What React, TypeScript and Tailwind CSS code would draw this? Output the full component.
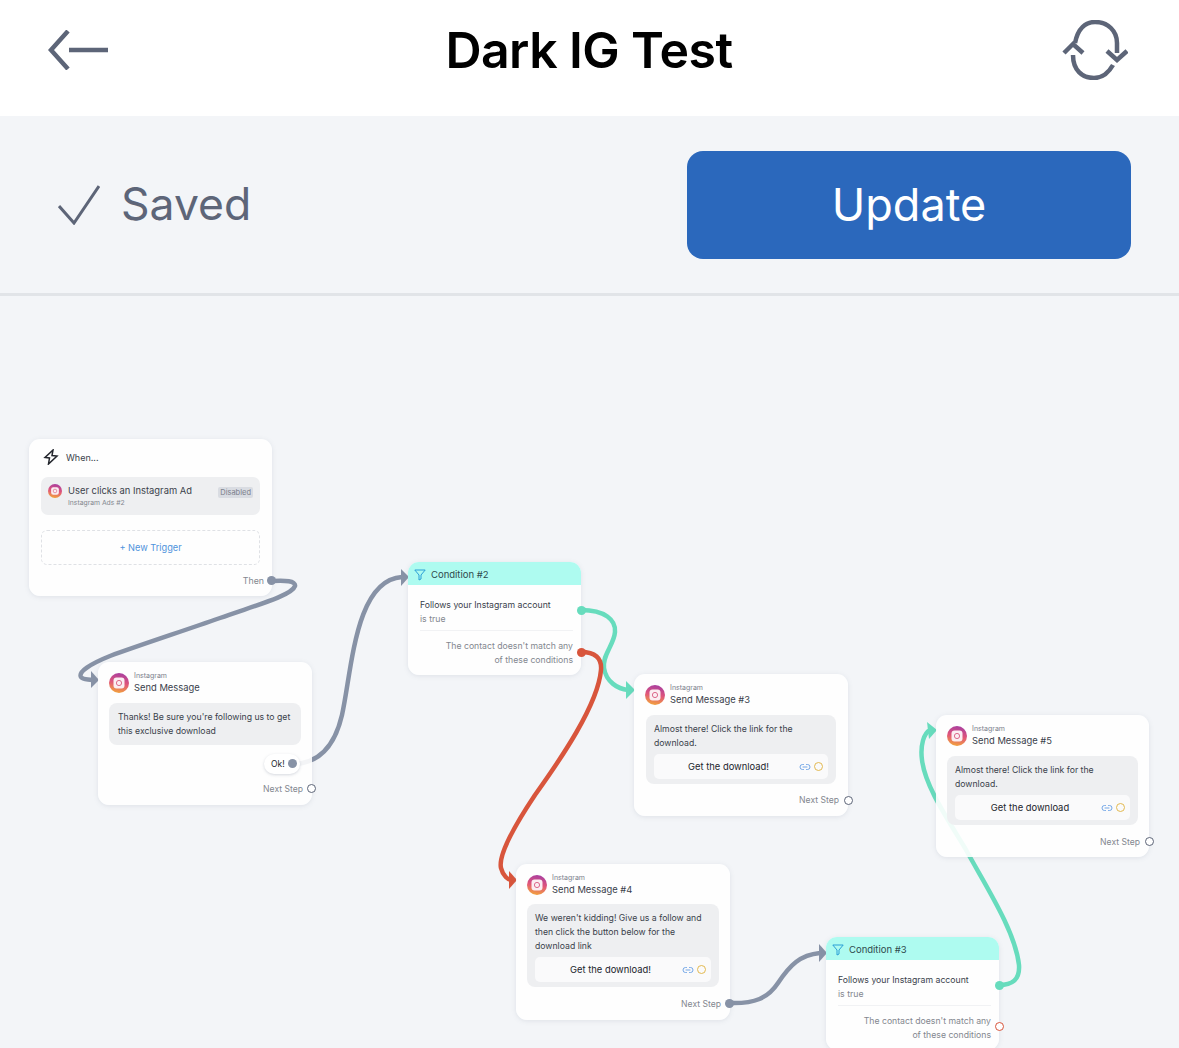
import { Link2 } from 'lucide-react'
import type { ReactNode } from 'react'

function InstagramIcon({ size, id }: { size: number; id: string }) {
  return (
    <svg width={size} height={size} viewBox="0 0 20 20" className="shrink-0">
      <defs>
        <linearGradient id={id} x1="0.6" y1="0" x2="0.4" y2="1">
          <stop offset="0" stopColor="#a83ea0" />
          <stop offset="0.5" stopColor="#e0557a" />
          <stop offset="1" stopColor="#f2a33c" />
        </linearGradient>
      </defs>
      <circle cx="10" cy="10" r="10" fill={`url(#${id})`} />
      <rect x="4.5" y="4.5" width="11" height="11" rx="3" fill="#fbeef2" />
      <circle cx="10" cy="10" r="2.6" fill="none" stroke="#dc6a8c" strokeWidth="1" />
    </svg>
  )
}

function FunnelIcon() {
  return (
    <svg width="12" height="12" viewBox="0 0 12 12" fill="none" stroke="#2a9fd6" strokeWidth="1" strokeLinejoin="round" className="shrink-0">
      <path d="M0.8 1 H11.2 L7 6 V10 L5 11 V6 Z" />
    </svg>
  )
}

function Port({ className }: { className: string }) {
  return <span className={`absolute h-[9px] w-[9px] rounded-full ${className}`} />
}

function Card({ className, children }: { className: string; children: ReactNode }) {
  return (
    <div className={`absolute rounded-[11px] bg-white/90 shadow-[0_1px_5px_rgba(120,130,150,0.16)] ${className}`}>
      {children}
    </div>
  )
}

function MessageHead({ title, id }: { title: string; id: string }) {
  return (
    <div className="flex items-center gap-[5px]">
      <InstagramIcon size={20} id={id} />
      <div className="flex flex-col">
        <span className="text-[7px] leading-[10px] text-[#7b808c]">Instagram</span>
        <span className="text-[9.4px] leading-[13px] text-[#3a3f4b]">{title}</span>
      </div>
    </div>
  )
}

function LinkButton({ label }: { label: string }) {
  return (
    <div className="mt-[4px] flex h-[25px] items-center rounded-[5px] bg-[#fafafb] pl-[8px] pr-[5px]">
      <span className="flex-1 pr-[4px] text-center text-[9.4px] text-[#22252c]">{label}</span>
      <span className="flex items-center gap-[3px]">
        <Link2 size={12} strokeWidth={1.9} color="#6fa3e6" />
        <span className="h-[9px] w-[9px] rounded-full border border-[#e3b94f]" />
      </span>
    </div>
  )
}

function NextStep({ className, dot }: { className: string; dot: string }) {
  return (
    <>
      <span className={`absolute text-[8.6px] leading-[12px] text-[#83878f] ${className}`}>Next Step</span>
      <Port className={dot} />
    </>
  )
}

function ConditionBody({ title }: { title: string }) {
  return (
    <>
      <div className="flex h-[23px] items-center gap-[5px] rounded-t-[11px] bg-[#aefbf0] pl-[6px] pt-[3px]">
        <FunnelIcon />
        <span className="text-[9.5px] text-[#2f4a4d]">{title}</span>
      </div>
      <div className="px-[12px] pt-[13px] text-[8.7px] leading-[14px]">
        <div className="text-[#3a3f4b]">Follows your Instagram account</div>
        <div className="text-[#83878f]">is true</div>
        <div className="mt-[4px] -mr-[4px] border-t border-[#f1f2f4] pt-[8px] text-right text-[#83878f]">
          <div>The contact doesn't match any</div>
          <div>of these conditions</div>
        </div>
      </div>
    </>
  )
}

export default function App() {
  return (
    <div className="flex h-[1048px] w-[1179px] flex-col overflow-hidden bg-[#f3f5f8] font-['Inter',sans-serif]">
      {/* Header */}
      <header className="flex h-[116px] items-center justify-between bg-white pb-[16px] pl-[48px] pr-[51px]">
        <svg width="60" height="40" viewBox="0 0 60 40" fill="none" stroke="#5d6578" strokeWidth="4.5">
          <path d="M20 1 L3 20 L20 39" />
          <path d="M21 20 H60" />
        </svg>
        <h1 className="ml-[8px] text-[50px] font-semibold tracking-[-0.6px] text-black">Dark IG Test</h1>
        <svg width="66" height="60" viewBox="0 0 66 60" fill="none" stroke="#5d6578" strokeWidth="4.5">
          <path d="M13 23 C16 8 24 2 33 2 C46 2 55 11 55 23 L55 33" />
          <path d="M11 35 C11 50 20 58 32 58 C41 58 47 52 51 45" />
          <path d="M2 33 L11 24 L21 33" />
          <path d="M45 31 L55 40 L65 31" />
        </svg>
      </header>

      {/* Toolbar */}
      <div className="flex h-[180px] items-center justify-between border-b-[3px] border-[#e1e4e8] pl-[58px] pr-[48px]">
        <div className="flex items-center gap-[21px]">
          <svg width="42" height="40" viewBox="0 0 42 40" fill="none" stroke="#5d6578" strokeWidth="3">
            <path d="M1 21 L16 38 L41 1" />
          </svg>
          <span className="text-[44.5px] leading-none text-[#5d6578]">Saved</span>
        </div>
        <button className="flex h-[108px] w-[444px] items-center justify-center rounded-[16px] bg-[#2b68bc] text-[45px] text-white">
          Update
        </button>
      </div>

      {/* Canvas */}
      <main className="relative flex-1">
        <svg className="absolute left-0 top-[-296px]" width="1179" height="1048" fill="none" strokeWidth="4.5" strokeLinecap="round">
          <g stroke="#8792a6">
            <path d="M272 581 C285 580 296 581 295 586 C292 596 250 607 220 618 C180 632 140 645 110 656 C90 664 78 672 81 677 C83 680 88 679 92 680" />
            <path d="M292 764 C320 764 335 745 342 715 C352 670 355 580 402 577" />
            <path d="M729 1003 C755 1004 768 998 778 983 C790 965 800 955 820 953" />
          </g>
          <path d="M91 671 L99 680 L91 688 Z" fill="#8792a6" />
          <path d="M401 569 L409 577 L401 586 Z" fill="#8792a6" />
          <path d="M819 944 L827 953 L819 962 Z" fill="#8792a6" />
          <g stroke="#67dcbd">
            <path d="M581 610 C605 610 616 620 615 632 C614 645 602 655 604 668 C606 682 618 689 628 690" />
            <path d="M999 985 C1012 985 1020 980 1019 965 C1015 930 985 885 965 848 C945 815 925 785 922 760 C920 745 924 733 930 730" />
          </g>
          <path d="M626 681 L635 690 L626 699 Z" fill="#67dcbd" />
          <path d="M927 722 L937 730 L929 739 Z" fill="#67dcbd" />
          <path stroke="#d8553c" d="M581 652 C595 652 602 658 601 670 C598 705 560 760 535 795 C515 825 498 855 501 868 C503 876 508 880 512 880" />
          <path d="M509 871 L517 880 L509 889 Z" fill="#d8553c" />
        </svg>

        {/* When */}
        <Card className="left-[29px] top-[143px] h-[157px] w-[243px]">
          <div className="flex items-center gap-[7px] pl-[14px] pt-[10px]">
            <svg width="16" height="16" viewBox="0 0 16 16" fill="none" stroke="#22252c" strokeWidth="1.5" strokeLinejoin="miter" className="shrink-0">
              <path d="M10 1 L2 8.5 L6.5 9 L5.5 15 L14 7 L9 6.5 Z" />
            </svg>
            <span className="pt-[2px] text-[9px] text-[#3a3f4b]">When...</span>
          </div>
          <div className="mx-[12px] mt-[12px] flex h-[38px] rounded-[7px] bg-[#eeeff1] px-[7px] pt-[7px]">
            <InstagramIcon size={14} id="ig-when" />
            <div className="ml-[6px] flex flex-1 flex-col">
              <span className="text-[9.4px] leading-[13px] text-[#3a3f4b]">User clicks an Instagram Ad</span>
              <span className="text-[6.8px] leading-[11px] text-[#83878f]">Instagram Ads #2</span>
            </div>
            <span className="mt-[3px] h-[11px] rounded-[2px] bg-[#d9dce2] px-[2px] text-[7.5px] leading-[11px] text-[#7b808c]">Disabled</span>
          </div>
          <div className="mx-[12px] mt-[15px] flex h-[35px] items-center justify-center rounded-[6px] border border-dashed border-[#dfe1e5] text-[9.2px] text-[#4f93dc]">
            + New Trigger
          </div>
          <span className="absolute right-[8px] top-[136px] text-[8.8px] leading-[12px] text-[#83878f]">Then</span>
          <Port className="left-[238px] top-[137px] bg-[#8792a6]" />
        </Card>

        {/* Send Message */}
        <Card className="left-[98px] top-[366px] h-[143px] w-[214px]">
          <div className="pl-[11px] pt-[9px]"><MessageHead title="Send Message" id="ig-1" /></div>
          <div className="mx-[11px] mt-[9px] rounded-[8px] bg-[#eeeff1] px-[9px] py-[7px] text-[8.7px] leading-[14px] text-[#3a3f4b]">
            Thanks! Be sure you're following us to get<br />this exclusive download
          </div>
          <span className="absolute left-[166px] top-[92px] flex h-[20px] w-[36px] items-center rounded-[10px] bg-white pl-[7px] text-[8.5px] text-[#22252c] shadow-[0_1px_3px_rgba(120,130,150,0.3)]">Ok!</span>
          <Port className="left-[190px] top-[97px] bg-[#8792a6]" />
          <NextStep className="right-[9px] top-[121px]" dot="left-[209px] top-[122px] border border-[#5d6578] bg-white" />
        </Card>

        {/* Condition #2 */}
        <Card className="left-[408px] top-[266px] h-[113px] w-[173px]">
          <ConditionBody title="Condition #2" />
          <Port className="left-[169px] top-[44px] bg-[#67dcbd]" />
          <Port className="left-[169px] top-[86px] bg-[#d8553c]" />
        </Card>

        {/* Send Message #3 */}
        <Card className="left-[634px] top-[378px] h-[142px] w-[214px]">
          <div className="pl-[11px] pt-[9px]"><MessageHead title="Send Message #3" id="ig-3" /></div>
          <div className="mx-[12px] mt-[9px] rounded-[8px] bg-[#eeeff1] px-[8px] pb-[5px] pt-[7px] text-[8.7px] leading-[14px] text-[#3a3f4b]">
            Almost there! Click the link for the<br />download.
            <LinkButton label="Get the download!" />
          </div>
          <NextStep className="right-[9px] top-[120px]" dot="left-[210px] top-[122px] border border-[#5d6578] bg-white" />
        </Card>

        {/* Send Message #4 */}
        <Card className="left-[516px] top-[568px] h-[156px] w-[214px]">
          <div className="pl-[11px] pt-[9px]"><MessageHead title="Send Message #4" id="ig-4" /></div>
          <div className="mx-[11px] mt-[8px] rounded-[8px] bg-[#eeeff1] px-[8px] pb-[5px] pt-[7px] text-[8.7px] leading-[14px] text-[#3a3f4b]">
            We weren't kidding! Give us a follow and<br />then click the button below for the<br />download link
            <LinkButton label="Get the download!" />
          </div>
          <NextStep className="right-[9px] top-[134px]" dot="left-[209px] top-[135px] bg-[#8792a6]" />
        </Card>

        {/* Send Message #5 */}
        <Card className="left-[936px] top-[419px] h-[142px] w-[213px]">
          <div className="pl-[11px] pt-[9px]"><MessageHead title="Send Message #5" id="ig-5" /></div>
          <div className="mx-[11px] mt-[9px] rounded-[8px] bg-[#eeeff1] px-[8px] pb-[5px] pt-[7px] text-[8.7px] leading-[14px] text-[#3a3f4b]">
            Almost there! Click the link for the<br />download.
            <LinkButton label="Get the download" />
          </div>
          <NextStep className="right-[9px] top-[121px]" dot="left-[209px] top-[122px] border border-[#5d6578] bg-white" />
        </Card>

        {/* Condition #3 */}
        <Card className="left-[826px] top-[641px] h-[113px] w-[173px]">
          <ConditionBody title="Condition #3" />
          <Port className="left-[169px] top-[44px] bg-[#67dcbd]" />
          <Port className="left-[169px] top-[85px] border border-[#d8553c] bg-white" />
        </Card>
      </main>
    </div>
  )
}
